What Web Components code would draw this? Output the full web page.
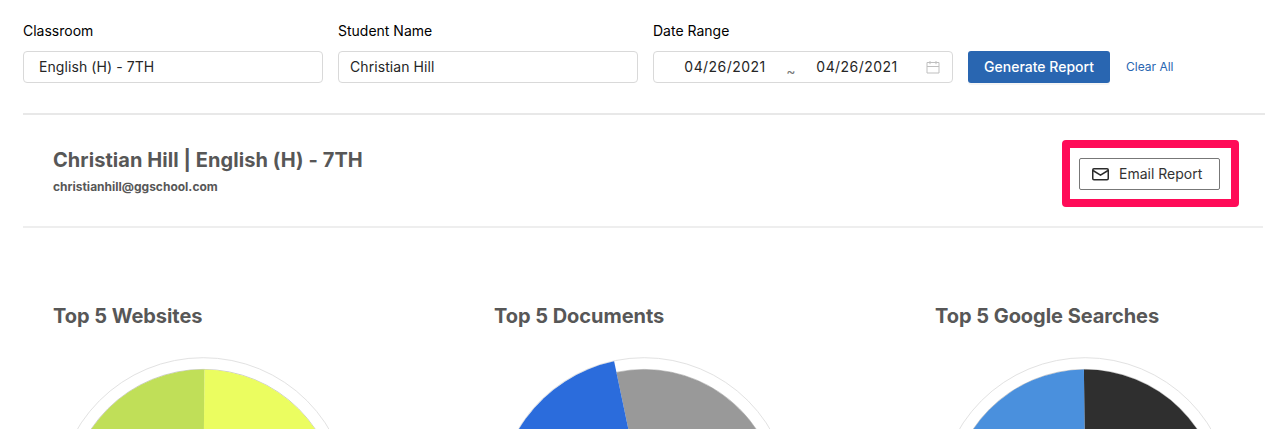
<!DOCTYPE html>
<html lang="en">
<head>
<meta charset="utf-8">
<title>Student Report</title>
<style>
  body {
    margin: 0;
    background: #fff;
    color: #000;
    font: 14px/22px Inter, "Liberation Sans", sans-serif;
  }
</style>
</head>
<body>
<report-page>
  <filter-bar slot="filters">
    <form-field label="Classroom" style="--inset: 15px">English (H) - 7TH</form-field>
    <form-field label="Student Name">Christian Hill</form-field>
    <form-field label="Date Range">
      <date-range from="04/26/2021" to="04/26/2021"></date-range>
    </form-field>
    <primary-button>Generate Report</primary-button>
    <text-link>Clear All</text-link>
  </filter-bar>
  <student-header slot="student" email="christianhill@ggschool.com">
    Christian Hill | English (H) - 7TH
    <highlight-box slot="action"><email-button>Email Report</email-button></highlight-box>
  </student-header>
  <pie-chart label="Top 5 Websites" slices="0.15:50:#ebfd60,50:100.15:#c0df58"></pie-chart>
  <pie-chart label="Top 5 Documents" slices="-3.3:50:#999999,50:96.7:#2b6cdc:146.2"></pie-chart>
  <pie-chart label="Top 5 Google Searches" slices="-0.15:50:#2f2f2f,50:99.85:#4a90dd"></pie-chart>
</report-page>

<script>
/** Page layout: filter row, student row, then a row of charts. */
class ReportPage extends HTMLElement {
  constructor() {
    super();
    this.attachShadow({ mode: "open" });
  }

  connectedCallback() {
    this.shadowRoot.innerHTML = `
      <style>
        :host {
          display: flex;
          flex-direction: column;
          box-sizing: border-box;
          height: 100vh;
          padding: 20px 3px 0 23px;
          overflow: hidden;
        }
        .charts {
          display: grid;
          flex: 1;
          grid-template-columns: repeat(3, 300px);
          grid-template-rows: minmax(0, 1fr);
          column-gap: 141px;
          min-height: 0;
          padding: 73px 0 0 30px;
        }
      </style>
      <slot name="filters"></slot>
      <slot name="student"></slot>
      <div class="charts"><slot></slot></div>
    `;
  }
}

class FilterBar extends HTMLElement {
  constructor() {
    super();
    this.attachShadow({ mode: "open" });
  }

  connectedCallback() {
    this.shadowRoot.innerHTML = `
      <style>
        :host {
          display: flex;
          flex: none;
          align-items: flex-end;
          gap: 15px;
          padding-bottom: 30px;
          border-bottom: 2px solid #e8e8e8;
        }
      </style>
      <slot></slot>
    `;
  }
}

/** A label above a bordered box that holds the value. */
class FormField extends HTMLElement {
  constructor() {
    super();
    this.attachShadow({ mode: "open" });
  }

  connectedCallback() {
    this.shadowRoot.innerHTML = `
      <style>
        :host { display: block; width: 300px; }
        .label { margin-bottom: 9px; }
        .box {
          box-sizing: border-box;
          height: 32px;
          padding: 4px 11px 4px var(--inset, 11px);
          border: 1px solid #d9d9d9;
          border-radius: 4px;
          color: #262626;
          letter-spacing: 0.08px;
        }
      </style>
      <div class="label">${this.getAttribute("label")}</div>
      <div class="box"><slot></slot></div>
    `;
  }
}

class DateRange extends HTMLElement {
  constructor() {
    super();
    this.attachShadow({ mode: "open" });
  }

  connectedCallback() {
    this.shadowRoot.innerHTML = `
      <style>
        :host { display: flex; align-items: center; height: 22px; }
        .date { width: 120px; text-align: center; letter-spacing: 0.45px; }
        .tilde { width: 12px; padding-top: 8px; color: #777; font-size: 14px; line-height: 14px; text-align: center; }
        svg { margin: -1px 0 0 9px; }
      </style>
      <span class="date">${this.getAttribute("from")}</span>
      <span class="tilde">~</span>
      <span class="date">${this.getAttribute("to")}</span>
      <svg width="14" height="14" viewBox="0 0 14 14" fill="none" stroke="#bfbfbf">
        <path d="M1 2.5h12v10.5H1zM1 6.5h12M4 1v3.2M10 1v3.2"/>
      </svg>
    `;
  }
}

class PrimaryButton extends HTMLElement {
  constructor() {
    super();
    this.attachShadow({ mode: "open" });
  }

  connectedCallback() {
    this.shadowRoot.innerHTML = `
      <style>
        :host { display: block; }
        button {
          display: block;
          width: 142px;
          height: 32px;
          padding: 0;
          border: 0;
          border-radius: 3px;
          background: #2966b1;
          box-shadow: 0 2px 0 rgba(0, 0, 0, 0.04);
          color: #fff;
          font: inherit;
          font-weight: 500;
        }
      </style>
      <button><slot></slot></button>
    `;
  }
}

class TextLink extends HTMLElement {
  constructor() {
    super();
    this.attachShadow({ mode: "open" });
  }

  connectedCallback() {
    this.shadowRoot.innerHTML = `
      <style>
        :host { display: block; padding-left: 1px; color: #2966b1; font-size: 12px; line-height: 32px; }
      </style>
      <slot></slot>
    `;
  }
}

class StudentHeader extends HTMLElement {
  constructor() {
    super();
    this.attachShadow({ mode: "open" });
  }

  connectedCallback() {
    this.shadowRoot.innerHTML = `
      <style>
        :host {
          display: flex;
          flex: none;
          justify-content: space-between;
          box-sizing: border-box;
          height: 113px;
          margin-right: 2px;
          padding: 25px 24px 0 30px;
          border-bottom: 2px solid #eee;
          color: #575757;
        }
        .name { margin-top: 5px; font-size: 20px; font-weight: 700; letter-spacing: 0.06px; line-height: 30px; }
        .email { font-size: 12px; font-weight: 700; line-height: 24px; }
      </style>
      <div>
        <div class="name"><slot></slot></div>
        <div class="email">${this.getAttribute("email")}</div>
      </div>
      <slot name="action"></slot>
    `;
  }
}

class HighlightBox extends HTMLElement {
  constructor() {
    super();
    this.attachShadow({ mode: "open" });
  }

  connectedCallback() {
    this.shadowRoot.innerHTML = `
      <style>
        :host {
          display: block;
          box-sizing: border-box;
          width: 177px;
          height: 67px;
          padding: 10px 11px 9px 9px;
          border: 8px solid #ff0b58;
          border-radius: 4px;
        }
      </style>
      <slot></slot>
    `;
  }
}

class EmailButton extends HTMLElement {
  constructor() {
    super();
    this.attachShadow({ mode: "open" });
  }

  connectedCallback() {
    this.shadowRoot.innerHTML = `
      <style>
        :host { display: block; }
        button {
          display: flex;
          align-items: center;
          gap: 10px;
          box-sizing: border-box;
          width: 141px;
          height: 32px;
          padding: 0 0 0 12px;
          border: 1px solid #777;
          border-radius: 2px;
          background: #fff;
          color: #333;
          font: inherit;
          white-space: nowrap;
        }
        svg { flex: none; }
      </style>
      <button>
        <svg width="17" height="14" viewBox="0 0 17 14" fill="none" stroke="#2b2b2b" stroke-width="1.5">
          <rect x=".75" y="1.75" width="15.5" height="11" rx="1.2"/>
          <path d="M1 3.5l7.5 4.6L16 3.5"/>
        </svg>
        <span><slot></slot></span>
      </button>
    `;
  }
}

/**
 * Pie chart inside a thin ring.
 * slices: "start:end:color[:radius]" in percent of a turn, clockwise from the top.
 */
class PieChart extends HTMLElement {
  constructor() {
    super();
    this.attachShadow({ mode: "open" });
  }

  connectedCallback() {
    const slices = this.getAttribute("slices").split(",");
    this.shadowRoot.innerHTML = `
      <style>
        :host { display: block; overflow: hidden; }
        h2 {
          margin: 0;
          color: #575757;
          font-size: 20px;
          font-weight: 700;
          letter-spacing: -0.04px;
          line-height: 30px;
          white-space: nowrap;
        }
        svg { display: block; margin-top: 23px; }
      </style>
      <h2>${this.getAttribute("label")}</h2>
      <svg width="300" height="300" viewBox="0 0 300 300">
        <circle cx="150.2" cy="150.4" r="146.7" fill="none" stroke="#e2e2e2"/>
        <circle cx="150.2" cy="150.4" r="135" fill="none" stroke="#ccc"/>
        ${slices.map((slice) => this.drawSlice(slice)).join("")}
      </svg>
    `;
  }

  drawSlice(slice) {
    const [start, end, color, radius = 134.8] = slice.split(":");
    const point = (percent) => {
      const angle = (percent / 100) * 2 * Math.PI;
      return `${150.2 + radius * Math.sin(angle)} ${150.4 - radius * Math.cos(angle)}`;
    };
    const large = end - start > 50 ? 1 : 0;
    return `<path fill="${color}" d="M150.2 150.4L${point(start)}A${radius} ${radius} 0 ${large} 1 ${point(end)}Z"/>`;
  }
}

customElements.define("report-page", ReportPage);
customElements.define("filter-bar", FilterBar);
customElements.define("form-field", FormField);
customElements.define("date-range", DateRange);
customElements.define("primary-button", PrimaryButton);
customElements.define("text-link", TextLink);
customElements.define("student-header", StudentHeader);
customElements.define("highlight-box", HighlightBox);
customElements.define("email-button", EmailButton);
customElements.define("pie-chart", PieChart);
</script>
</body>
</html>
